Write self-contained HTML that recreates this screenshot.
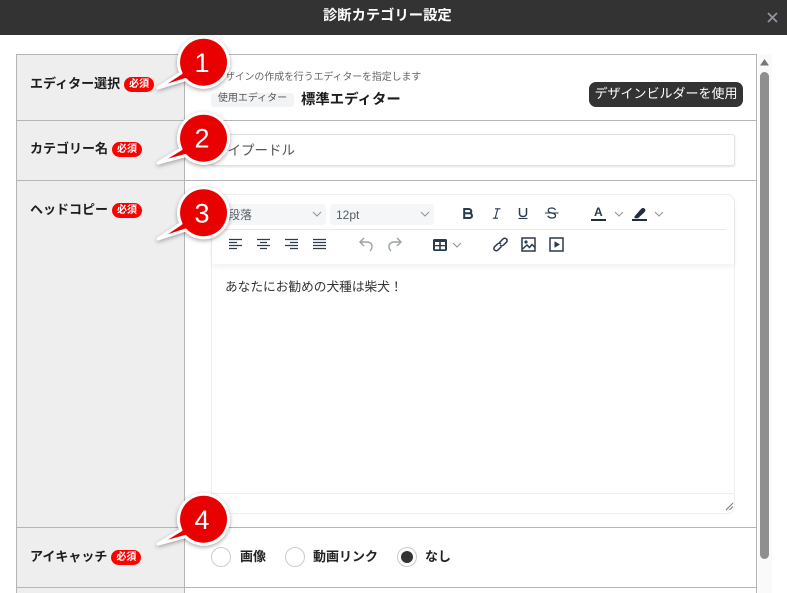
<!DOCTYPE html>
<html lang="ja"><head><meta charset="utf-8">
<style>
html,body{margin:0;padding:0;width:787px;height:593px;overflow:hidden;background:#fff;font-family:"Liberation Sans","Noto Sans CJK JP",sans-serif;color:#222}
.a{position:absolute;white-space:nowrap}
.line{position:absolute;background:#b5b5b5}
.lab{position:absolute;left:30px;font-size:13px;font-weight:700;line-height:18px;color:#1c1c1c;white-space:nowrap}
.req{display:inline-block;width:30px;height:15px;border-radius:8px;background:#f00;color:#fff;font-size:10px;font-weight:700;line-height:15px;text-align:center;vertical-align:1px;margin-left:4px}
.sel{position:absolute;top:204px;height:21px;background:#f5f6f7;border-radius:3px;font-size:12px;line-height:22px;color:#555d66}
svg{position:absolute;overflow:visible}
.ic{fill:none;stroke:#2b3a4c;stroke-width:1.5}
.chev{fill:none;stroke:#8a929a;stroke-width:1}
.radio{position:absolute;top:547px;width:18px;height:18px;border:1px solid #ccc;border-radius:50%;background:#fff}
.rl{position:absolute;top:548px;font-size:13px;font-weight:700;line-height:18px;color:#222;white-space:nowrap}
</style></head><body>
<div class="a" style="left:0;top:0;width:787px;height:35px;background:#333"></div>
<div class="a" style="left:323px;top:7px;font-size:14.3px;font-weight:700;line-height:18px;color:#fff">診断カテゴリー設定</div>
<svg style="left:767px;top:12px" width="11" height="10"><path d="M1 1L10 10M10 1L1 10" stroke="#8f959b" stroke-width="1.9" fill="none"/></svg>

<div class="a" style="left:17px;top:55px;width:167px;height:538px;background:#eee"></div>
<div class="line" style="left:16px;top:54px;width:741px;height:1px"></div>
<div class="line" style="left:16px;top:120px;width:741px;height:1px"></div>
<div class="line" style="left:16px;top:180px;width:741px;height:1px"></div>
<div class="line" style="left:16px;top:527px;width:741px;height:1px"></div>
<div class="line" style="left:16px;top:587px;width:741px;height:1px"></div>
<div class="line" style="left:16px;top:54px;width:1px;height:539px"></div>
<div class="line" style="left:184px;top:54px;width:1px;height:539px"></div>
<div class="line" style="left:756px;top:54px;width:1px;height:539px"></div>

<div class="a" style="left:758px;top:54px;width:14px;height:539px;background:#fafafa"></div>
<svg style="left:759px;top:59px" width="11" height="8"><path d="M5.5 0L10 6.5H1z" fill="#777"/></svg>
<div class="a" style="left:760px;top:72px;width:9px;height:487px;background:#8f8f8f;border-radius:5px"></div>

<div class="lab" style="top:75px">エディター選択<span class="req">必須</span></div>
<div class="lab" style="top:140px">カテゴリー名<span class="req">必須</span></div>
<div class="lab" style="top:201px">ヘッドコピー<span class="req">必須</span></div>
<div class="lab" style="top:548px">アイキャッチ<span class="req">必須</span></div>

<div class="a" style="left:215px;top:70px;font-size:10px;line-height:15px;color:#666;letter-spacing:-.15px">デザインの作成を行うエディターを指定します</div>
<div class="a" style="left:211px;top:93px;width:83px;height:14px;background:#f2f3f5;border-radius:3px;font-size:10px;line-height:12px;text-align:center;color:#555">使用エディター</div>
<div class="a" style="left:301px;top:90px;font-size:14.4px;font-weight:700;line-height:20px;color:#1c1c1c">標準エディター</div>
<div class="a" style="left:589px;top:82px;width:154px;height:25px;background:#333;border-radius:7px;color:#fff;font-size:13px;line-height:23px;text-align:center">デザインビルダーを使用</div>

<div class="a" style="left:211px;top:134px;width:524px;height:32px;box-sizing:border-box;border:1px solid #e2e2e2;border-radius:3px;box-shadow:0 1px 2px rgba(0,0,0,.12);background:#fff"></div>
<div class="a" style="left:214px;top:141px;font-size:13.5px;line-height:20px;color:#555">トイプードル</div>

<!-- editor -->
<div class="a" style="left:211px;top:194px;width:524px;height:320px;box-sizing:border-box;border:1px solid #eee;border-radius:8px;background:#fff"></div>
<div class="a" style="left:212px;top:195px;width:522px;height:69px;background:#fff;border-radius:8px 8px 0 0;box-shadow:0 3px 6px rgba(0,0,0,.06)"></div>
<div class="a" style="left:219px;top:229px;width:507px;height:1px;background:#e8e8e8"></div>
<div class="sel" style="left:220px;width:106px;padding-left:8px;box-sizing:border-box">段落</div>
<div class="sel" style="left:330px;width:104px;padding-left:6px;box-sizing:border-box">12pt</div>
<svg style="left:312px;top:211px" width="10" height="6"><path class="chev" d="M1 1L5 5L9 1"/></svg>
<svg style="left:420px;top:211px" width="10" height="6"><path class="chev" d="M1 1L5 5L9 1"/></svg>

<svg style="left:463px;top:208px" width="10" height="11"><path d="M1.2 1H5.5C7.3 1 8.3 2 8.3 3.3C8.3 4.6 7.4 5.2 6 5.3C7.8 5.4 9 6.2 9 7.7C9 9.2 7.8 10 5.9 10H1.2ZM1.2 5.3H6" fill="none" stroke="#2b3a4c" stroke-width="2"/></svg>
<svg style="left:492px;top:208px" width="9" height="11"><path d="M3 .8H8.5M5.7 .8L3.2 10.2M.8 10.2H6" fill="none" stroke="#2b3a4c" stroke-width="1.1"/></svg>
<svg style="left:518px;top:207px" width="11" height="13"><path d="M1.5 1V6.5C1.5 8.5 3 9.5 5 9.5C7 9.5 8.5 8.5 8.5 6.5V1" fill="none" stroke="#2b3a4c" stroke-width="1.5"/><path d="M.5 11.5H9.5" stroke="#2b3a4c" stroke-width="1.1"/></svg>
<svg style="left:545px;top:207px" width="14" height="12"><path d="M10.5 3C9.8 1.7 8.4 1 6.7 1C4.7 1 3.2 2 3.2 3.6C3.2 6.8 10.5 5.2 10.5 8.6C10.5 10.2 9 11 7 11C5 11 3.5 10.2 2.8 8.8" fill="none" stroke="#2b3a4c" stroke-width="1.3"/><path d="M0 6H13.5" stroke="#2b3a4c" stroke-width="1"/></svg>
<div class="a" style="left:594px;top:205px;font-size:12px;font-weight:700;line-height:14px;color:#2b3a4c">A</div>
<div class="a" style="left:591px;top:219px;width:15px;height:2px;background:#1f2d3d"></div>
<svg style="left:614px;top:211px" width="10" height="6"><path class="chev" d="M1 1L5 5L9 1"/></svg>
<svg style="left:632px;top:207px" width="16" height="15"><path d="M2.5 9.5L9 2C10 1 11.5 .6 12.7 1.7C13.8 2.8 13.4 4.2 12.4 5.2L6 11.2H2.5z" fill="#1f2d3d"/><rect x="0" y="12" width="15" height="2" fill="#1f2d3d"/></svg>
<svg style="left:654px;top:211px" width="10" height="6"><path class="chev" d="M1 1L5 5L9 1"/></svg>

<svg style="left:229px;top:238px" width="14" height="12"><path d="M0 1.5H13M0 4.5H8M0 7.5H13M0 10.5H8" stroke="#2b3a4c" stroke-width="1.3"/></svg>
<svg style="left:257px;top:238px" width="14" height="12"><path d="M0 1.5H13M3 4.5H10M0 7.5H13M3 10.5H10" stroke="#2b3a4c" stroke-width="1.3"/></svg>
<svg style="left:285px;top:238px" width="14" height="12"><path d="M0 1.5H13M5 4.5H13M0 7.5H13M5 10.5H13" stroke="#2b3a4c" stroke-width="1.3"/></svg>
<svg style="left:313px;top:238px" width="14" height="12"><path d="M0 1.5H13M0 4.5H13M0 7.5H13M0 10.5H13" stroke="#2b3a4c" stroke-width="1.3"/></svg>
<svg style="left:359px;top:237px" width="14" height="15"><path d="M5 1L1 5L5 9M1 5H8C11 5 13 7 13 9.5C13 11.5 12 13 11 14" fill="none" stroke="#9aa1a8" stroke-width="1.4"/></svg>
<svg style="left:388px;top:237px" width="14" height="15"><path d="M9 1L13 5L9 9M13 5H6C3 5 1 7 1 9.5C1 11.5 2 13 3 14" fill="none" stroke="#9aa1a8" stroke-width="1.4"/></svg>
<svg style="left:433px;top:239px" width="15" height="13"><rect x="0" y="0" width="14" height="12" rx="1.5" fill="#2b3a4c"/><rect x="2" y="3" width="4.2" height="3" fill="#fff"/><rect x="7.8" y="3" width="4.2" height="3" fill="#fff"/><rect x="2" y="7.3" width="4.2" height="3" fill="#fff"/><rect x="7.8" y="7.3" width="4.2" height="3" fill="#fff"/></svg>
<svg style="left:452px;top:242px" width="10" height="6"><path class="chev" d="M1 1L5 5L9 1"/></svg>
<svg style="left:493px;top:237px" width="15" height="15"><path class="ic" d="M6.5 5.5L8 4L10 2C11 1 12.5 1 13.5 2C14.3 3 14.3 4.3 13.3 5.3L10.5 8C9.5 9 8 9 7 8M8.5 9.5L7 11L5 13C4 14 2.5 14 1.5 13C.7 12 .7 10.7 1.7 9.7L4.5 7C5.5 6 7 6 8 7"/></svg>
<svg style="left:521px;top:237px" width="15" height="15"><rect class="ic" x="1" y="1" width="13" height="13"/><circle cx="5" cy="5" r="1.6" fill="#2b3a4c"/><path class="ic" d="M1.5 12L6 8L8.5 10.5L11 7.5L14 10.5"/></svg>
<svg style="left:549px;top:237px" width="15" height="15"><rect class="ic" x="1" y="1" width="13" height="13"/><path d="M5.5 4.2L11 7.5L5.5 10.8z" fill="#2b3a4c"/></svg>

<div class="a" style="left:225px;top:278px;font-size:12.7px;line-height:18px;color:#333">あなたにお勧めの犬種は柴犬！</div>
<div class="a" style="left:212px;top:493px;width:522px;height:1px;background:#eee"></div>
<svg style="left:725px;top:502px" width="9" height="9"><path d="M1 8L8 1M4.5 8L8 4.5" stroke="#777" stroke-width="1"/></svg>

<!-- radios -->
<div class="radio" style="left:211px"></div><div class="rl" style="left:240px">画像</div>
<div class="radio" style="left:285px"></div><div class="rl" style="left:313px">動画リンク</div>
<div class="radio" style="left:397px"></div><div class="a" style="left:401px;top:551px;width:12px;height:12px;background:#333;border-radius:50%"></div><div class="rl" style="left:425px">なし</div>

<!-- callouts -->
<svg style="left:0;top:0;z-index:5" width="787" height="593">
<defs><filter id="s" x="-30%" y="-30%" width="160%" height="160%"><feDropShadow dx="0" dy="1.5" stdDeviation="2" flood-color="#000" flood-opacity=".35"/></filter></defs>
<g filter="url(#s)">
<path d="M158 88L181 73A25 25 0 1 1 185.5 79.5Z" fill="#e90606" stroke="#fff" stroke-width="3" stroke-linejoin="round"/>
<path d="M158 163L181 149A25 25 0 1 1 185.5 155.5Z" fill="#e90606" stroke="#fff" stroke-width="3" stroke-linejoin="round"/>
<path d="M158 239L181 223.5A25 25 0 1 1 185.5 230Z" fill="#e90606" stroke="#fff" stroke-width="3" stroke-linejoin="round"/>
<path d="M158 544L181 530A25 25 0 1 1 185.5 536.5Z" fill="#e90606" stroke="#fff" stroke-width="3" stroke-linejoin="round"/>
</g>
<g font-family="'Liberation Sans',sans-serif" font-size="27" fill="#fff" text-anchor="middle">
<text x="202" y="72">1</text><text x="202" y="147.5">2</text><text x="202" y="222.5">3</text><text x="202" y="529">4</text>
</g>
</svg>
</body></html>
